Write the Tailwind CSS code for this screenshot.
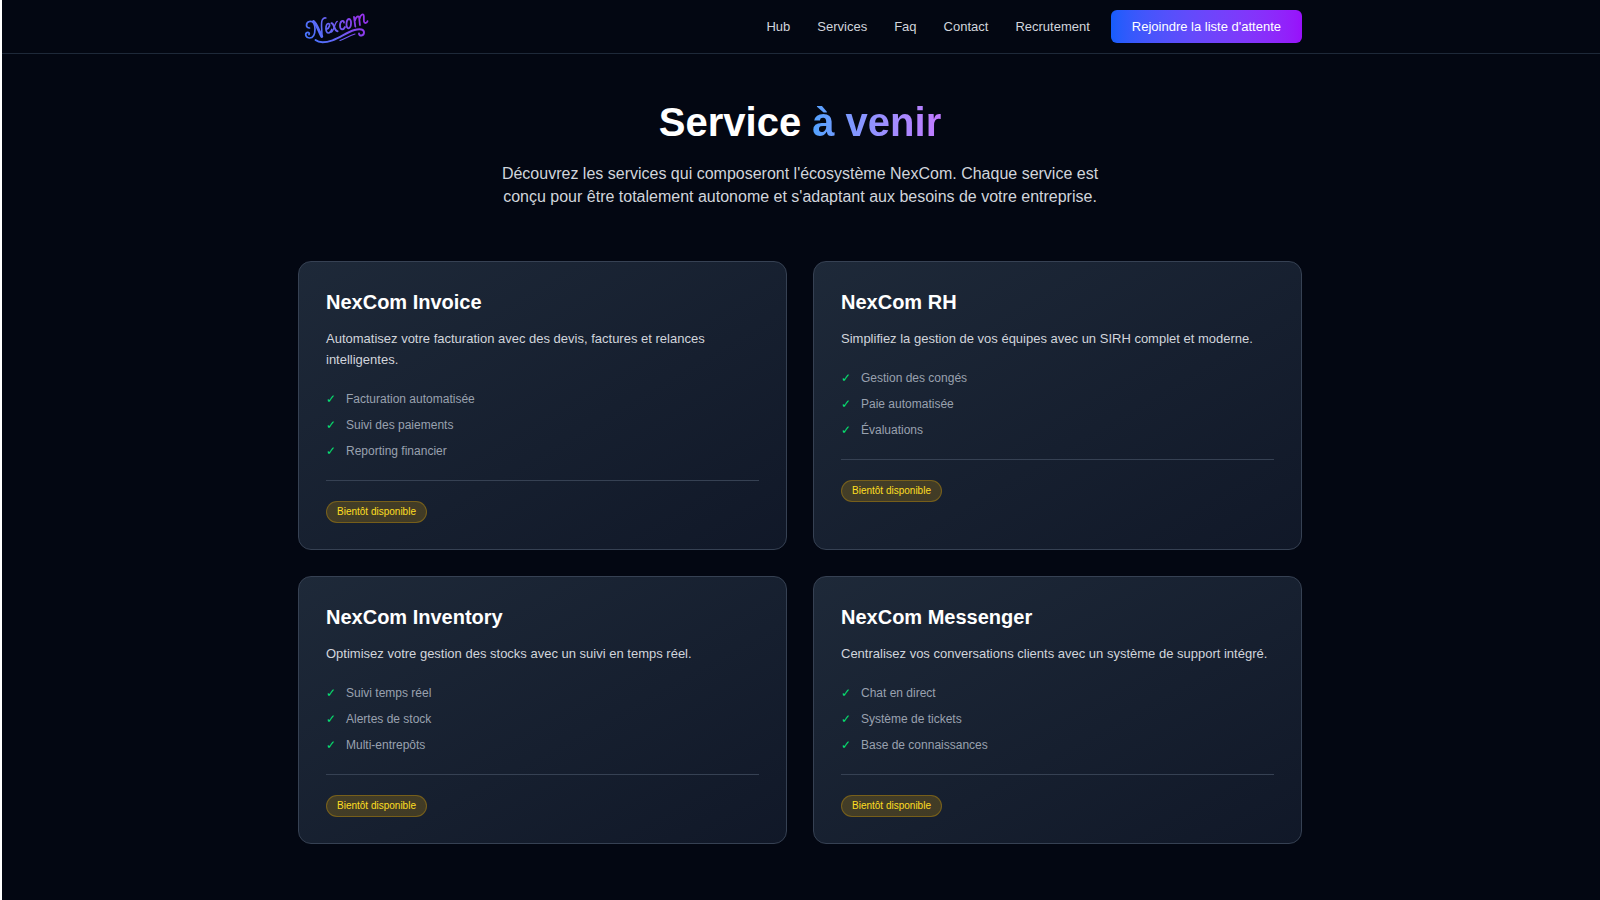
<!DOCTYPE html>
<html lang="fr">
<head>
<meta charset="utf-8">
<meta name="viewport" content="width=device-width, initial-scale=1">
<title>NexCom - Services</title>
<script src="https://cdn.jsdelivr.net/npm/@tailwindcss/browser@4"></script>
</head>
<body class="min-h-screen bg-[#030712] font-['Liberation_Sans',Arial,sans-serif] text-[13px] text-white">
<div class="fixed inset-y-0 left-0 z-10 w-0.5 bg-white"></div>
<header class="border-b border-gray-800">
  <div class="mx-auto flex h-[53px] max-w-[1004px] items-center justify-between">
    <a href="#" aria-label="Nexcom" class="ml-[6px] block">
      <svg class="h-[34px] w-[68px]" viewBox="0 0 68 34" fill="none" stroke="url(#brand)" stroke-linecap="round" stroke-linejoin="round">
        <defs><linearGradient id="brand" x1="0" y1="34" x2="50" y2="0" gradientUnits="userSpaceOnUse"><stop stop-color="#3f78ff"/><stop offset=".5" stop-color="#6666f6"/><stop offset="1" stop-color="#9333ea"/></linearGradient></defs>
        <path stroke-width="1.7" d="M5.500 18C1.500 18 1.500 12.500 5.500 11.500c4-.8 5.500 3 5.500 7.500 0 4.500-1.500 9-5.500 9-3.500 0-5-4-2.500-5.500 1.800-.6 2.800.8 2 2"/>
        <path stroke-width="2.800" d="M9.500 11.500c3 2 5 9 8.300 15"/>
        <path stroke-width="1.600" d="M17.800 26.500c.6-6-1.300-13 .4-16.500.8-1.600 2.300-2.400 3.600-2"/>
        <path stroke-width="1.700" d="M22 19.500c4-1.500 4.500-6 2.300-6-3 .5-3.300 9.500.2 9.500 1.700 0 2.600-1.500 3.300-3.500"/>
        <path stroke-width="2" d="M27.500 13.200c2.600-.6 2.600 8 6 8"/>
        <path stroke-width="1.300" d="M33.300 11.300c-2.500.6-3.300 10-6 10.700"/>
        <path stroke-width="1.800" d="M40 12.500c-.2-2.800-4-2-4 3 0 4.800 3.500 4.700 5 1.500"/>
        <path stroke-width="1.800" d="M45 9c-3.300.6-3.300 9.500-.4 9.300 3.100-.6 3.300-9.600.4-9.300Z"/>
        <path stroke-width="1.800" d="M50 7l1.300 9.500M51 10.500c.8-4 3.800-5.500 4.200-2.500l.7 7M55.500 9c.8-4.500 4-6 4.300-3 .2 3-.5 7 1.500 7 1.200 0 1.800-.6 2.200-1.800"/>
        <path stroke-width="1.900" d="M11.500 30c3 2.500 9 3 17 .3 8-2.800 14-8 22-10.300 6-1.600 9.500-.5 9.500 2.500 0 3.500-5 4-5 1"/>
        <path stroke-width="1.100" d="M36 30.500c5-2 9-4.500 15-6.500"/>
      </svg>
    </a>
    <nav class="flex items-center gap-[27px] text-gray-300">
      <a href="#">Hub</a><a href="#">Services</a><a href="#">Faq</a><a href="#">Contact</a><a href="#">Recrutement</a>
      <button type="button" class="-ml-1.5 h-[33px] rounded-md bg-linear-to-r from-blue-600 to-purple-600 px-[21px] text-white">Rejoindre la liste d'attente</button>
    </nav>
  </div>
</header>
<main class="mx-auto max-w-[1004px] pt-[45px] pb-14">
  <div class="mx-auto mb-[53px] max-w-[630px] text-center">
    <h1 class="mb-[17px] text-[40px] leading-[46px] font-bold">Service <span class="bg-linear-to-r from-blue-400 to-purple-400 bg-clip-text text-transparent">à venir</span></h1>
    <p class="text-[16px] leading-[23px] text-gray-300">Découvrez les services qui composeront l'écosystème NexCom. Chaque service est conçu pour être totalement autonome et s'adaptant aux besoins de votre entreprise.</p>
  </div>
  <div class="grid grid-cols-1 gap-[26px] md:grid-cols-2">
    <article class="rounded-[13px] border border-gray-700 bg-linear-to-br from-gray-800 to-gray-900 px-[27px] py-[26px]">
      <h2 class="mb-3 text-[20px] leading-[28px] font-bold">NexCom Invoice</h2>
      <p class="mb-[21px] leading-[21px] text-gray-300">Automatisez votre facturation avec des devis, factures et relances intelligentes.</p>
      <ul class="mb-[21px] flex flex-col gap-[10px] text-[12px] leading-4 text-gray-400">
        <li class="flex gap-[10px]"><span class="text-green-400">✓</span>Facturation automatisée</li>
        <li class="flex gap-[10px]"><span class="text-green-400">✓</span>Suivi des paiements</li>
        <li class="flex gap-[10px]"><span class="text-green-400">✓</span>Reporting financier</li>
      </ul>
      <div class="flex border-t border-gray-700 pt-5"><span class="rounded-full border border-yellow-500/30 bg-yellow-500/20 px-[10px] py-[3px] text-[10px] leading-[14px] text-yellow-300">Bientôt disponible</span></div>
    </article>
    <article class="rounded-[13px] border border-gray-700 bg-linear-to-br from-gray-800 to-gray-900 px-[27px] py-[26px]">
      <h2 class="mb-3 text-[20px] leading-[28px] font-bold">NexCom RH</h2>
      <p class="mb-[21px] leading-[21px] text-gray-300">Simplifiez la gestion de vos équipes avec un SIRH complet et moderne.</p>
      <ul class="mb-[21px] flex flex-col gap-[10px] text-[12px] leading-4 text-gray-400">
        <li class="flex gap-[10px]"><span class="text-green-400">✓</span>Gestion des congés</li>
        <li class="flex gap-[10px]"><span class="text-green-400">✓</span>Paie automatisée</li>
        <li class="flex gap-[10px]"><span class="text-green-400">✓</span>Évaluations</li>
      </ul>
      <div class="flex border-t border-gray-700 pt-5"><span class="rounded-full border border-yellow-500/30 bg-yellow-500/20 px-[10px] py-[3px] text-[10px] leading-[14px] text-yellow-300">Bientôt disponible</span></div>
    </article>
    <article class="rounded-[13px] border border-gray-700 bg-linear-to-br from-gray-800 to-gray-900 px-[27px] py-[26px]">
      <h2 class="mb-3 text-[20px] leading-[28px] font-bold">NexCom Inventory</h2>
      <p class="mb-[21px] leading-[21px] text-gray-300">Optimisez votre gestion des stocks avec un suivi en temps réel.</p>
      <ul class="mb-[21px] flex flex-col gap-[10px] text-[12px] leading-4 text-gray-400">
        <li class="flex gap-[10px]"><span class="text-green-400">✓</span>Suivi temps réel</li>
        <li class="flex gap-[10px]"><span class="text-green-400">✓</span>Alertes de stock</li>
        <li class="flex gap-[10px]"><span class="text-green-400">✓</span>Multi-entrepôts</li>
      </ul>
      <div class="flex border-t border-gray-700 pt-5"><span class="rounded-full border border-yellow-500/30 bg-yellow-500/20 px-[10px] py-[3px] text-[10px] leading-[14px] text-yellow-300">Bientôt disponible</span></div>
    </article>
    <article class="rounded-[13px] border border-gray-700 bg-linear-to-br from-gray-800 to-gray-900 px-[27px] py-[26px]">
      <h2 class="mb-3 text-[20px] leading-[28px] font-bold">NexCom Messenger</h2>
      <p class="mb-[21px] leading-[21px] text-gray-300">Centralisez vos conversations clients avec un système de support intégré.</p>
      <ul class="mb-[21px] flex flex-col gap-[10px] text-[12px] leading-4 text-gray-400">
        <li class="flex gap-[10px]"><span class="text-green-400">✓</span>Chat en direct</li>
        <li class="flex gap-[10px]"><span class="text-green-400">✓</span>Système de tickets</li>
        <li class="flex gap-[10px]"><span class="text-green-400">✓</span>Base de connaissances</li>
      </ul>
      <div class="flex border-t border-gray-700 pt-5"><span class="rounded-full border border-yellow-500/30 bg-yellow-500/20 px-[10px] py-[3px] text-[10px] leading-[14px] text-yellow-300">Bientôt disponible</span></div>
    </article>
  </div>
</main>
</body>
</html>
